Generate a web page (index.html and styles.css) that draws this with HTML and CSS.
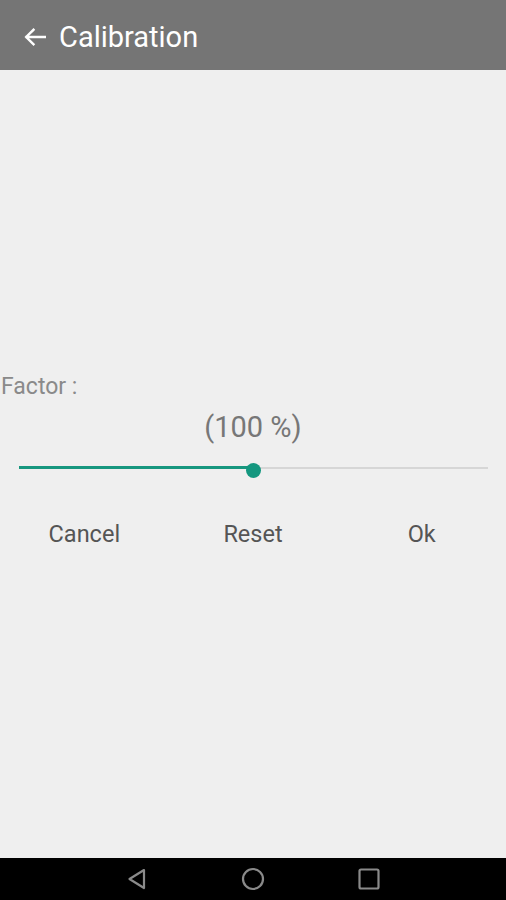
FILE: index.html
```html
<!DOCTYPE html>
<html>
<head>
<meta charset="utf-8">
<link rel="stylesheet" href="styles.css">
</head>
<body>
<div class="app">
  <header class="appbar">
    <svg class="back" width="22" height="18" viewBox="0 0 22 18"><path d="M21 9H2.5M9.5 1.8L2.2 9l7.3 7.2" fill="none" stroke="#fff" stroke-width="2.4" stroke-linecap="square"/></svg>
    <span class="title">Calibration</span>
  </header>
  <main class="content">
    <div class="label">Factor :</div>
    <div class="percent">(100 %)</div>
    <div class="slider">
      <div class="track">
        <div class="fill" style="width:50%"></div>
        <div class="thumb" style="left:50%"></div>
      </div>
    </div>
    <div class="buttons">
      <div class="btn">Cancel</div>
      <div class="btn">Reset</div>
      <div class="btn">Ok</div>
    </div>
  </main>
  <nav class="navbar">
    <svg width="24" height="24" viewBox="0 0 24 24"><path d="M19 3 L4.5 12 L19 21 Z" fill="none" stroke="#8a8a8a" stroke-width="2.2" stroke-linejoin="round"/></svg>
    <svg width="24" height="24" viewBox="0 0 24 24"><circle cx="12" cy="12" r="10" fill="none" stroke="#8a8a8a" stroke-width="2.2"/></svg>
    <svg width="24" height="24" viewBox="0 0 24 24"><rect x="2.5" y="2.5" width="19" height="19" rx="1.5" fill="none" stroke="#8a8a8a" stroke-width="2.2"/></svg>
  </nav>
</div>
</body>
</html>
```
FILE: styles.css
```css
* { box-sizing: border-box; }
html, body { margin: 0; padding: 0; }
body { font-family: Roboto, "Liberation Sans", sans-serif; background: #efefef; }
.app { width: 506px; height: 900px; display: flex; flex-direction: column; }
.appbar { height: 70px; background: #757575; display: flex; align-items: center; padding-left: 24px; flex-shrink: 0; }
.back { margin-right: 13px; margin-top: 3px; }
.title { color: #fff; font-size: 29px; line-height: 34px; margin-top: 4px; }
.content { flex: 1; padding-top: 304px; display: flex; flex-direction: column; }
.label { font-size: 23px; line-height: 26px; color: #8a8a8a; padding-left: 1px; }
.percent { font-size: 29px; line-height: 34px; color: #777; text-align: center; margin-top: 10px; }
.slider { padding: 0 18px 0 19px; margin-top: 23px; height: 6px; }
.track { position: relative; height: 2px; background: #d6d6d6; }
.fill { position: absolute; left: 0; top: -1px; height: 3px; background: #17977f; }
.thumb { position: absolute; top: -4px; width: 15px; height: 15px; margin-left: -8px; border-radius: 50%; background: #14977f; }
.buttons { display: flex; margin-top: 47px; }
.btn { flex: 1; text-align: center; font-size: 23.5px; line-height: 28px; color: #555; }
.navbar { height: 42px; background: #000; display: flex; align-items: center; justify-content: center; gap: 92px; flex-shrink: 0; }
```
